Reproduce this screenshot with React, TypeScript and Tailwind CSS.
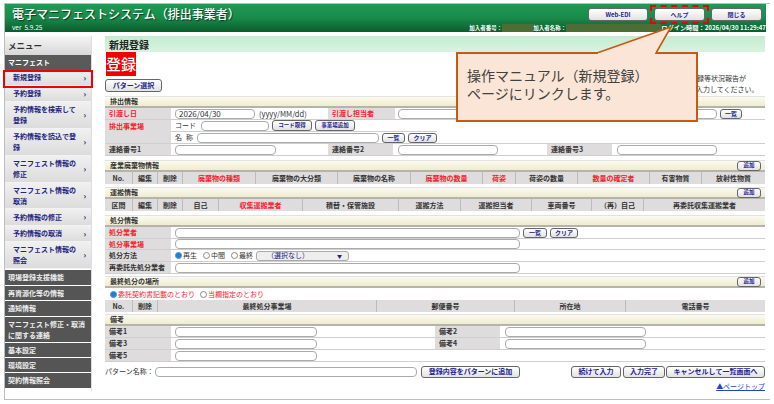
const font = "font-['Noto_Sans_CJK_JP','Liberation_Sans',sans-serif]";

const menuItems = [
  { label: "新規登録", h: "h-[16px]" },
  { label: "予約登録", h: "h-[16px]" },
  { label: "予約情報を検索して登録", h: "h-[27px]" },
  { label: "予約情報を読込で登録", h: "h-[27px]" },
  { label: "マニフェスト情報の修正", h: "h-[27px]" },
  { label: "マニフェスト情報の取消", h: "h-[26px]" },
  { label: "予約情報の修正", h: "h-[17px]" },
  { label: "予約情報の取消", h: "h-[16px]" },
  { label: "マニフェスト情報の照会", h: "h-[27px]" },
];

const darkItems = [
  { label: "現場登録支援機能", h: "h-[15px]" },
  { label: "再資源化等の情報", h: "h-[14px]" },
  { label: "通知情報", h: "h-[15px]" },
  { label: "マニフェスト修正・取消に関する連絡", h: "h-[25px]" },
  { label: "基本設定", h: "h-[14px]" },
  { label: "環境設定", h: "h-[14px]" },
  { label: "契約情報照会", h: "h-[15px]" },
];

const wasteCols = [
  { t: "No.", w: "w-[28px]" },
  { t: "編集", w: "w-[25px]" },
  { t: "削除", w: "w-[25px]" },
  { t: "廃棄物の種類", w: "w-[73px]", red: true },
  { t: "廃棄物の大分類", w: "w-[82px]" },
  { t: "廃棄物の名称", w: "w-[73px]" },
  { t: "廃棄物の数量", w: "w-[72px]", red: true },
  { t: "荷姿", w: "w-[33px]", red: true },
  { t: "荷姿の数量", w: "w-[62px]" },
  { t: "数量の確定者", w: "w-[72px]", red: true },
  { t: "有害物質", w: "w-[52px]" },
  { t: "放射性物質", w: "flex-1" },
];

const transportCols = [
  { t: "区間", w: "w-[28px]" },
  { t: "編集", w: "w-[25px]" },
  { t: "削除", w: "w-[25px]" },
  { t: "自己", w: "w-[36px]" },
  { t: "収集運搬業者", w: "w-[84px]", red: true },
  { t: "積替・保管施設", w: "w-[96px]" },
  { t: "運搬方法", w: "w-[62px]" },
  { t: "運搬担当者", w: "w-[71px]" },
  { t: "車両番号", w: "w-[60px]" },
  { t: "（再）自己", w: "w-[52px]" },
  { t: "再委託収集運搬業者", w: "flex-1" },
];

const finalCols = [
  { t: "No.", w: "w-[28px]" },
  { t: "削除", w: "w-[25px]" },
  { t: "最終処分事業場", w: "w-[219px]" },
  { t: "郵便番号", w: "w-[138px]" },
  { t: "所在地", w: "w-[111px]" },
  { t: "電話番号", w: "flex-1" },
];

type Col = { t: string; w: string; red?: boolean };

const HeadRow = ({ cols }: { cols: Col[] }) => (
  <div className="flex h-[12px] bg-[#dedcdc]">
    {cols.map((c) => (
      <div
        key={c.t}
        className={`${c.w} flex items-center justify-center border-r border-[#bcbcbc] text-[7px] font-bold whitespace-nowrap last:border-r-0 ${c.red ? "text-[#f5222d]" : "text-[#333]"}`}
      >
        {c.t}
      </div>
    ))}
  </div>
);

const SectionHead = ({ title, add }: { title: string; add?: boolean }) => (
  <div className="flex h-[12px] items-center justify-between border-t border-[#e2e2e2] border-b-2 border-b-[#b4b4ac] bg-gradient-to-b from-[#fbfaf0] to-[#efecd0] pr-[4px] pl-[5px]">
    <span className="text-[7px] font-bold text-[#333]">{title}</span>
    {add && <Btn className="h-[10px] w-[24px] text-[5.5px]">追加</Btn>}
  </div>
);

const Btn = ({ children, className = "" }: { children: React.ReactNode; className?: string }) => (
  <div
    className={`flex shrink-0 items-center justify-center rounded-[3px] border border-[#666] bg-gradient-to-b from-white to-[#e2e2e2] font-bold whitespace-nowrap text-[#23238e] ${className}`}
  >
    {children}
  </div>
);

const Field = ({ w, children = null }: { w: string; children?: React.ReactNode }) => (
  <div className={`${w} flex h-[10px] shrink-0 items-center rounded-[4px] border border-[#aaa] bg-white pl-[3px] text-[8px] leading-none text-[#333]`}>
    {children}
  </div>
);

const Label = ({ children, red, w = "w-[66px]", top }: { children: React.ReactNode; red?: boolean; w?: string; top?: boolean }) => (
  <div
    className={`${w} flex shrink-0 self-stretch bg-[#dedcdc] pl-[4px] text-[7px] font-bold whitespace-nowrap ${top ? "items-start pt-[1px]" : "items-center"} ${red ? "text-[#f5222d]" : "text-[#333]"}`}
  >
    {children}
  </div>
);

const Row = ({ children, className = "h-[12px]" }: { children: React.ReactNode; className?: string }) => (
  <div className={`flex items-center border-b border-[#cfcfcf] ${className}`}>{children}</div>
);

const Radio = ({ on, label, red, className = "" }: { on?: boolean; label: string; red?: boolean; className?: string }) => (
  <span className={`flex items-center gap-[1px] text-[7px] whitespace-nowrap ${red ? "text-[#f5222d]" : "text-[#333]"} ${className}`}>
    <span className={`h-[7px] w-[7px] rounded-full border ${on ? "border-[#4a90d9] bg-[#1f7fd6]" : "border-[#888] bg-white"}`} />
    {label}
  </span>
);

const Callout = () => (
  <div className="absolute top-[48px] left-[451px] h-[70px] w-[242px] border-2 border-[#c55a11] bg-[#fbe5d6] pt-[12px] pl-[9px] text-[14px] leading-[18px] text-[#404040]">
    操作マニュアル（新規登録）
    <br />
    ページにリンクします。
    <svg className="absolute -top-[27px] left-[139px] overflow-visible" width="80" height="28" viewBox="0 0 80 28">
      <path d="M0 26 L74 0 L59 26" fill="#fbe5d6" stroke="#c55a11" strokeWidth="1.6" strokeLinejoin="miter" />
      <rect x="1" y="26" width="57" height="3" fill="#fbe5d6" />
    </svg>
  </div>
);

export default function App() {
  return (
    <div className={`h-[404px] w-[774px] overflow-hidden bg-white pt-[3px] pl-[4px] ${font}`}>
      <div className="relative h-[397px] w-[766px] border-y border-l border-[#bdbdbd]">
        <header className="flex h-[28px] w-[761px] justify-between bg-gradient-to-b from-[#1f9a55] via-[#1a8a4a] to-[#0a5c2c] pl-[7px]">
          <div className="flex flex-col justify-between">
            <div className="pt-[1px] text-[12px] leading-[17px] font-medium text-white [text-shadow:1px_1px_1px_#0a3a1c]">
              電子マニフェストシステム（排出事業者）
            </div>
            <div className="pb-[1px] text-[6.5px] leading-[7px] text-white">ver&nbsp;&nbsp;5.9.25</div>
          </div>
          <div className="flex flex-col items-end justify-between">
            <div className="flex gap-[6px] pt-[4px] pr-[4px] text-[6px]">
              <Btn className="h-[13px] w-[60px]">Web-EDI</Btn>
              <Btn className="h-[13px] w-[51px]">ヘルプ</Btn>
              <Btn className="h-[13px] w-[51px]">閉じる</Btn>
            </div>
            <div className="flex h-[8px] items-center text-[5.5px] font-bold whitespace-nowrap text-white">
              <span>加入者番号：</span>
              <span className="h-[8px] w-[31px] bg-[#4c6e34]" />
              <span>加入者名称：</span>
              <span className="h-[8px] w-[95px] bg-[#4c6e34]" />
              <span className="text-[6.2px]">ログイン時間：2026/04/30 11:29:47</span>
            </div>
          </div>
        </header>

        <div className="flex pt-[4px]">
          <aside className="w-[87px] shrink-0 border-r border-[#ddd]">
            <div className="flex h-[19px] items-center bg-gradient-to-b from-[#f5f5f5] to-[#d8d8d8] pl-[3px] text-[8.5px] font-bold text-[#333]">
              メニュー
            </div>
            <div className="flex h-[15px] items-center bg-[#5a5a5a] pl-[3px] text-[7px] font-bold text-white">マニフェスト</div>
            <nav>
              {menuItems.map((item) => (
                <div
                  key={item.label}
                  className={`${item.h} flex items-center justify-between border-b border-[#f2f2f2] bg-gradient-to-b from-[#f0f0f0] to-[#dcdcdc] pr-[5px] pl-[8px]`}
                >
                  <span className="w-[66px] text-[7px] leading-[11px] font-bold text-[#23237e]">{item.label}</span>
                  <span className="text-[8px] leading-none font-bold text-[#23237e]">›</span>
                </div>
              ))}
            </nav>
            <div className="mt-[1px] flex flex-col gap-[1px]">
              {darkItems.map((item) => (
                <div key={item.label} className={`${item.h} flex items-center bg-[#555] pr-[4px] pl-[3px] text-[7px] leading-[11px] font-bold text-[#eee]`}>
                  {item.label}
                </div>
              ))}
            </div>
          </aside>

          <main className="ml-[13px] w-[660px] shrink-0">
            <div className="flex h-[16px] items-center bg-gradient-to-b from-[#c4ecd0] to-[#d8f3e0] pl-[4px] text-[10px] font-bold text-[#222]">
              新規登録
            </div>
            <div className="ml-[1px] flex h-[24px] w-[30px] items-center justify-center bg-[#f00000] text-[15px] font-medium text-white">登録</div>
            <div className="flex items-center justify-between pt-[3px]">
              <Btn className="h-[13px] w-[57px] text-[7px]">パターン選択</Btn>
            </div>

            <section className="mt-[4px]">
              <SectionHead title="排出情報" />
              <Row>
                <Label red>引渡し日</Label>
                <Field w="ml-[4px] w-[80px]">2026/04/30</Field>
                <span className="ml-[4px] w-[69px] text-[7.5px] text-[#333]">(yyyy/MM/dd)</span>
                <Label red w="w-[67px]">引渡し担当者</Label>
                <Field w="ml-[3px] w-[319px]" />
                <Btn className="ml-[3px] h-[10px] w-[22px] text-[6px]">一覧</Btn>
              </Row>
              <div className="flex border-b border-[#cfcfcf]">
                <Label red top>排出事業場</Label>
                <div className="flex flex-col">
                  <div className="flex h-[12px] items-center border-b border-[#cfcfcf] pl-[4px] text-[7px] text-[#333]">
                    <span className="w-[26px]">コード</span>
                    <Field w="w-[68px]" />
                    <Btn className="ml-[3px] h-[11px] w-[40px] text-[5.5px]">コード取得</Btn>
                    <Btn className="ml-[3px] h-[11px] w-[40px] text-[5.5px]">事業場追加</Btn>
                  </div>
                  <div className="flex h-[11px] items-center pl-[4px] text-[7px] text-[#333]">
                    <span className="w-[22px] tracking-[4px]">名称</span>
                    <Field w="w-[182px]" />
                    <Btn className="ml-[3px] h-[10px] w-[23px] text-[6px]">一覧</Btn>
                    <Btn className="ml-[3px] h-[10px] w-[29px] text-[6px]">クリア</Btn>
                  </div>
                </div>
              </div>
              <Row>
                <Label>連絡番号1</Label>
                <Field w="ml-[4px] w-[101px]" />
                <div className="w-[52px] shrink-0" />
                <Label w="w-[65px]">連絡番号2</Label>
                <Field w="ml-[5px] w-[100px]" />
                <div className="w-[49px] shrink-0" />
                <Label w="w-[65px]">連絡番号3</Label>
                <Field w="ml-[5px] w-[100px]" />
              </Row>
            </section>

            <section className="mt-[4px]">
              <SectionHead title="産業廃棄物情報" add />
              <HeadRow cols={wasteCols} />
            </section>

            <section className="mt-[3px]">
              <SectionHead title="運搬情報" add />
              <HeadRow cols={transportCols} />
            </section>

            <section className="mt-[4px]">
              <SectionHead title="処分情報" />
              <Row>
                <Label red>処分業者</Label>
                <Field w="ml-[4px] w-[345px]" />
                <Btn className="ml-[3px] h-[10px] w-[24px] text-[6px]">一覧</Btn>
                <Btn className="ml-[3px] h-[10px] w-[28px] text-[6px]">クリア</Btn>
              </Row>
              <Row className="h-[11px]">
                <Label red>処分事業場</Label>
                <Field w="ml-[4px] w-[345px]" />
              </Row>
              <Row>
                <Label>処分方法</Label>
                <Radio on label="再生" className="ml-[4px] w-[28px]" />
                <Radio label="中間" className="w-[28px]" />
                <Radio label="最終" className="w-[25px]" />
                <div className="flex h-[10px] w-[93px] items-center justify-between rounded-[3px] border border-[#aaa] bg-[#eee] pr-[6px] pl-[10px] text-[7px] text-[#23237e]">
                  （選択なし）
                  <span className="text-[5px]">▼</span>
                </div>
              </Row>
              <Row>
                <Label>再委託先処分業者</Label>
                <Field w="ml-[4px] w-[345px]" />
              </Row>
            </section>

            <section className="mt-[2px]">
              <SectionHead title="最終処分の場所" add />
              <div className="flex h-[12px] items-center gap-[5px] pl-[5px]">
                <Radio on red label="委託契約書記載のとおり" />
                <Radio red label="当欄指定のとおり" />
              </div>
              <HeadRow cols={finalCols} />
            </section>

            <section className="mt-[2px]">
              <SectionHead title="備考" />
              <Row>
                <Label>備考1</Label>
                <Field w="ml-[4px] w-[142px]" />
                <div className="w-[118px] shrink-0" />
                <Label w="w-[65px]">備考2</Label>
                <Field w="ml-[5px] w-[141px]" />
              </Row>
              <Row>
                <Label>備考3</Label>
                <Field w="ml-[4px] w-[142px]" />
                <div className="w-[118px] shrink-0" />
                <Label w="w-[65px]">備考4</Label>
                <Field w="ml-[5px] w-[141px]" />
              </Row>
              <Row>
                <Label>備考5</Label>
                <Field w="ml-[4px] w-[142px]" />
              </Row>
            </section>

            <div className="mt-[3px] flex h-[13px] items-center text-[7px] text-[#333]">
              <span className="w-[50px] whitespace-nowrap">パターン名称：</span>
              <Field w="w-[262px]" />
              <Btn className="ml-[4px] h-[12px] w-[99px] text-[7px]">登録内容をパターンに追加</Btn>
              <Btn className="ml-[51px] h-[12px] w-[50px] text-[7px]">続けて入力</Btn>
              <Btn className="ml-[2px] h-[12px] w-[42px] text-[7px]">入力完了</Btn>
              <Btn className="ml-[1px] h-[12px] flex-1 text-[7px]">キャンセルして一覧画面へ</Btn>
            </div>
            <div className="mt-[3px] text-right text-[7px] leading-[10px] text-[#2346c0] underline">▲ページトップ</div>
          </main>
        </div>

        {/* 吹き出しの下に隠れる案内文 */}
        <div className="absolute top-[69px] left-[684px] text-[7px] leading-[11px] whitespace-nowrap text-[#333]">
          <span className="block pl-[8px]">録等状況報告が</span>
          <span className="block">を入力してください。</span>
        </div>

        {/* 赤枠・吹き出し */}
        <div className="absolute top-[1px] left-[645px] h-[19px] w-[59px] border-2 border-dashed border-[#f00000]" />
        <div className="absolute top-[66px] -left-[2px] h-[18px] w-[90px] border-2 border-[#f00000]" />
        <Callout />
      </div>
    </div>
  );
}
